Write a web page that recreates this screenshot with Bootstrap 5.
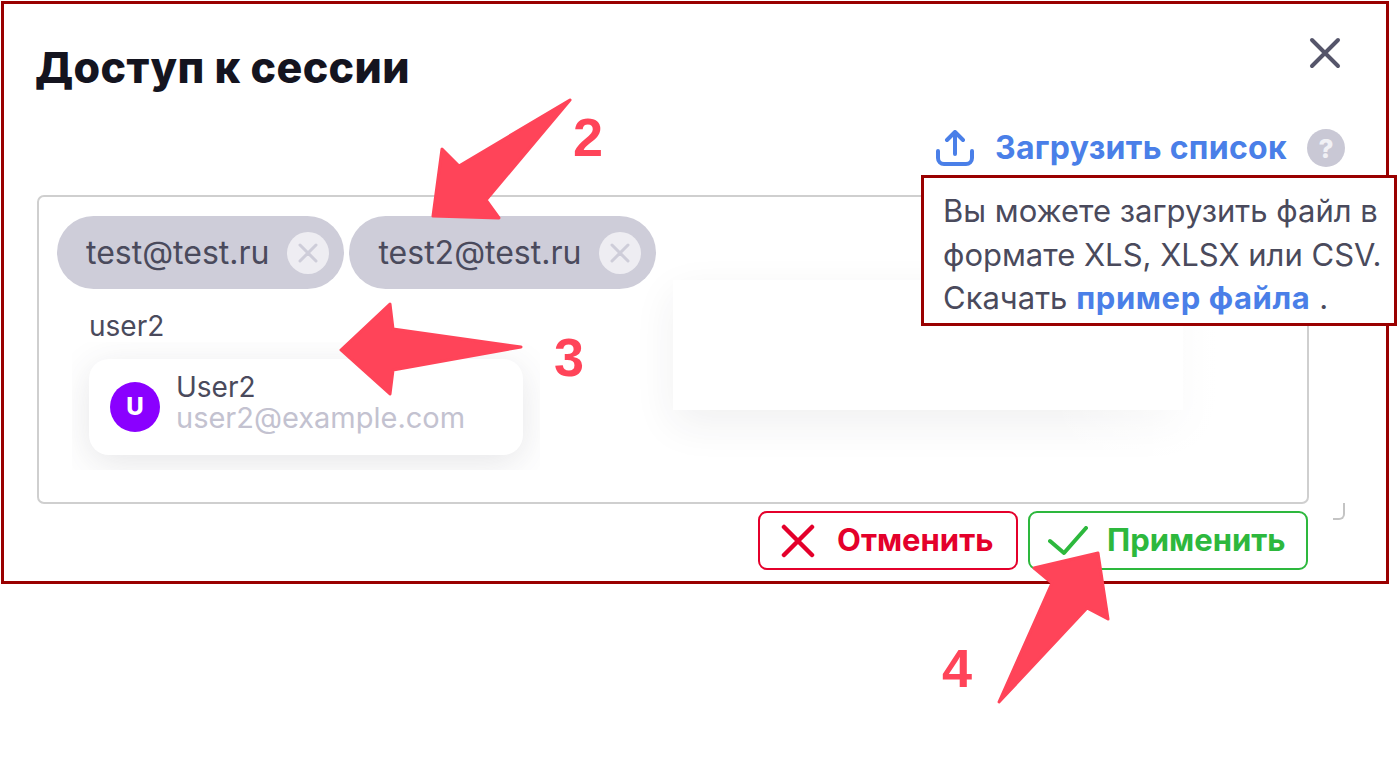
<!DOCTYPE html>
<html lang="ru">
<head>
    <meta charset="UTF-8">
    <title>Доступ к сессии</title>
    <link href="https://cdn.jsdelivr.net/npm/bootstrap@5.3.0/dist/css/bootstrap.min.css" rel="stylesheet">
    <style>
        body {
            background: #fff;
            font-family: "Inter", "Noto Sans", sans-serif;
            color: #4a4a5c;
            position: relative;
            height: 780px;
            overflow: hidden;
        }

        /* dark red frames are part of the screenshot */
        .shot-frame {
            width: 1388px;
            height: 583px;
            margin: 1px 0 0 1px;
            border: 3px solid #990000;
            padding: 32px 47px 0 31px;
        }

        .dlg-title {
            font-weight: 800;
            font-size: 43px;
            letter-spacing: .4px;
            line-height: 62px;
            color: #14141f;
            margin: 0;
        }

        .close-x { margin: 1px -2px 0 0; }

        .upload-row {
            height: 54px;
            margin: 23px -6px 20px 0;
            gap: 20px;
        }

        .upload-link {
            font-weight: 700;
            font-size: 32px;
            letter-spacing: .3px;
            color: #4a7fe8;
            text-decoration: none;
            gap: 20px;
        }

        .help-dot {
            width: 38px;
            height: 38px;
            border-radius: 50%;
            background: #c9c8d5;
            color: #f1f1f5;
            font-weight: 800;
            font-size: 26px;
        }

        .tip-box {
            position: absolute;
            left: 921px;
            top: 175px;
            width: 476px;
            height: 151px;
            background: #fff;
            border: 3px solid #990000;
            padding: 11px 0 0 19px;
            font-size: 31px;
            line-height: 43.5px;
            white-space: nowrap;
            z-index: 3;
        }

        .tip-box a {
            color: #4a7fe8;
            font-weight: 700;
            letter-spacing: .6px;
            text-decoration: none;
        }

        .tag-box {
            position: relative;
            width: 1272px;
            height: 309px;
            margin-left: 2px;
            border: 2px solid #cfcfcf;
            border-radius: 7px;
            padding: 19px 18px;
        }

        .chip-row {
            position: relative;
            z-index: 1;
            gap: 5px;
        }

        .chip {
            height: 73px;
            border-radius: 37px;
            background: #cecdd9;
            padding: 0 15px 0 29px;
            font-size: 32px;
            color: #4a4a5c;
        }

        .chip-x {
            width: 42px;
            height: 42px;
            border-radius: 50%;
            background: #eeedf2;
            margin-left: 18px;
        }

        .typed-text {
            position: relative;
            font-size: 28px;
            line-height: 36px;
            margin: 19px 0 0 32px;
        }

        .menu-clip {
            position: relative;
            width: 468px;
            height: 128px;
            margin: -2px 0 0 15px;
            padding: 17px 17px 0;
            overflow: hidden;
        }

        .user-item {
            height: 96px;
            background: #fff;
            border-radius: 20px;
            box-shadow: 0 8px 36px rgba(60, 60, 80, .13);
            padding-left: 21px;
        }

        .user-ava {
            width: 50px;
            height: 50px;
            border-radius: 50%;
            background: #8a00ff;
            color: #fff;
            font-weight: 800;
            font-size: 24px;
        }

        .user-info { padding-bottom: 10px; }
        .user-name { font-size: 28px; line-height: 30px; }
        .user-mail { font-size: 29px; line-height: 31px; color: #c3c2d0; }

        /* empty popup behind the tooltip, its right side fades out */
        .ghost-panel {
            position: absolute;
            left: 634px;
            top: 83px;
            width: 510px;
            height: 130px;
            background: #fff;
            box-shadow: 0 14px 40px rgba(40, 40, 60, .07);
        }

        .ghost-panel::after {
            content: "";
            position: absolute;
            left: 380px;
            top: 0;
            width: 200px;
            height: 195px;
            background: linear-gradient(to right, rgba(255, 255, 255, 0), #fff);
        }

        .resize-mark {
            position: absolute;
            left: 1333px;
            top: 503px;
            width: 12px;
            height: 17px;
            border-right: 2px solid #c4c4c4;
            border-bottom: 2px solid #c4c4c4;
            border-bottom-right-radius: 6px;
        }

        .act-row { margin: 7px 31px 0 0; gap: 10px; }

        .act-btn {
            height: 59px;
            border-width: 2px;
            border-radius: 9px;
            background: #fff;
            font-weight: 700;
            font-size: 31px;
            padding: 0;
        }

        .act-cancel { width: 260px; padding-left: 21px; gap: 22px; border-color: #e4002b; color: #e4002b; }
        .act-apply { width: 280px; padding-left: 18px; gap: 19px; border-color: #2db83d; color: #2db83d; }

        .marks-layer {
            position: absolute;
            left: 0;
            top: 0;
            z-index: 5;
            pointer-events: none;
        }

        .step-num {
            position: absolute;
            z-index: 6;
            font-family: "Liberation Sans", sans-serif;
            font-weight: 700;
            font-size: 54px;
            line-height: 54px;
            color: #ff4459;
        }
    </style>
</head>
<body>
    <div class="shot-frame">
        <div class="d-flex justify-content-between align-items-start">
            <h1 class="dlg-title">Доступ к сессии</h1>
            <svg class="close-x" width="32" height="32" viewBox="0 0 32 32" fill="none" stroke="#55556a" stroke-width="4" stroke-linecap="round"><path d="M3 3 29 29M29 3 3 29"/></svg>
        </div>

        <div class="upload-row d-flex justify-content-end align-items-center">
            <a class="upload-link d-flex align-items-center" href="#">
                <svg width="40" height="36" viewBox="0 0 40 36" fill="none" stroke="#4a7fe8" stroke-width="4" stroke-linecap="round" stroke-linejoin="round"><path d="M20 24V3M12 10l8-8 8 8M3 21v7a6 6 0 0 0 6 6h22a6 6 0 0 0 6-6v-7"/></svg>
                Загрузить список
            </a>
            <span class="help-dot d-flex align-items-center justify-content-center">?</span>
        </div>

        <div class="tag-box">
            <div class="ghost-panel"></div>
            <div class="chip-row d-flex">
                <span class="chip d-flex align-items-center">test@test.ru
                    <span class="chip-x d-flex align-items-center justify-content-center">
                        <svg width="20" height="20" viewBox="0 0 20 20" stroke="#cecdd9" stroke-width="3" stroke-linecap="round"><path d="M2 2 18 18M18 2 2 18"/></svg>
                    </span>
                </span>
                <span class="chip d-flex align-items-center">test2@test.ru
                    <span class="chip-x d-flex align-items-center justify-content-center">
                        <svg width="20" height="20" viewBox="0 0 20 20" stroke="#cecdd9" stroke-width="3" stroke-linecap="round"><path d="M2 2 18 18M18 2 2 18"/></svg>
                    </span>
                </span>
            </div>
            <div class="typed-text">user2</div>
            <div class="menu-clip">
                <div class="user-item d-flex align-items-center gap-3">
                    <span class="user-ava d-flex align-items-center justify-content-center">U</span>
                    <div class="user-info">
                        <div class="user-name">User2</div>
                        <div class="user-mail">user2@example.com</div>
                    </div>
                </div>
            </div>
        </div>

        <div class="d-flex justify-content-end act-row">
            <button class="btn act-btn act-cancel d-flex align-items-center" type="button">
                <svg width="34" height="34" viewBox="0 0 34 34" fill="none" stroke="#e4002b" stroke-width="4.5" stroke-linecap="round"><path d="M3 3 31 31M31 3 3 31"/></svg>
                Отменить
            </button>
            <button class="btn act-btn act-apply d-flex align-items-center" type="button">
                <svg width="40" height="30" viewBox="0 0 40 30" fill="none" stroke="#2db83d" stroke-width="4" stroke-linecap="round" stroke-linejoin="round"><path d="M2 15 16 27 38 2"/></svg>
                Применить
            </button>
        </div>
    </div>

    <div class="tip-box">
        Вы можете загрузить файл в<br>
        формате XLS, XLSX или CSV.<br>
        Скачать <a href="#">пример файла</a> .
    </div>
    <div class="resize-mark"></div>

    <!-- annotation arrows over the dialog -->
    <svg class="marks-layer" width="1398" height="780" viewBox="0 0 1398 780" fill="#ff4459" stroke="#ff4459" stroke-width="3" stroke-linejoin="round">
        <polygon points="570,100 459,166 442,149 433,216 499,218 486,200"/>
        <polygon points="390,304 393,329 521,347 393,370 390,394 341,350"/>
        <polygon points="999,702 1052,583 1034,568 1098,553 1108,619 1087,608"/>
    </svg>
    <span class="step-num" style="left:573px;top:110px">2</span>
    <span class="step-num" style="left:554px;top:330px">3</span>
    <span class="step-num" style="left:942px;top:641px">4</span>

    <script src="https://cdn.jsdelivr.net/npm/bootstrap@5.3.0/dist/js/bootstrap.bundle.min.js"></script>
</body>
</html>
